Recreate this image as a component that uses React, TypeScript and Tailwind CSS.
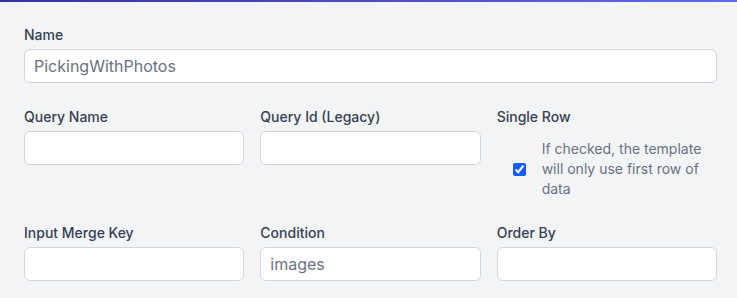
import React from "react";

interface FieldProps {
  label: string;
  value?: string;
}

function Field({ label, value }: FieldProps) {
  return (
    <div className="flex flex-col">
      <label className="text-sm font-medium leading-5 text-gray-700">{label}</label>
      <input
        type="text"
        readOnly
        placeholder={value}
        className="mt-1 h-[34px] w-full rounded-md border border-gray-300 bg-white px-[9px] text-base text-gray-700 placeholder:text-gray-500 outline-none"
      />
    </div>
  );
}

export default function App() {
  return (
    <div
      className="min-h-[298px] w-[737px] bg-gray-100"
      style={{ fontFamily: "Inter, 'Noto Sans', sans-serif" }}
    >
      <div className="h-[2px] bg-gradient-to-r from-[#3730a3] to-[#6366f1]" />
      <div className="flex flex-col gap-6 pl-6 pr-5 pt-[23px]">
        <Field label="Name" value="PickingWithPhotos" />

        <div className="grid grid-cols-3 gap-x-4">
          <Field label="Query Name" />
          <Field label="Query Id (Legacy)" />
          <div className="flex flex-col">
            <label className="text-sm font-medium leading-5 text-gray-700">Single Row</label>
            <div className="mt-3 flex items-center gap-4 pl-4">
              <input
                type="checkbox"
                checked
                readOnly
                className="h-[13px] w-[13px] shrink-0 accent-blue-600"
              />
              <p className="text-sm leading-5 text-gray-500">
                If checked, the template will only use first row of data
              </p>
            </div>
          </div>
        </div>

        <div className="grid grid-cols-3 gap-x-4">
          <Field label="Input Merge Key" />
          <Field label="Condition" value="images" />
          <Field label="Order By" />
        </div>
      </div>
    </div>
  );
}
